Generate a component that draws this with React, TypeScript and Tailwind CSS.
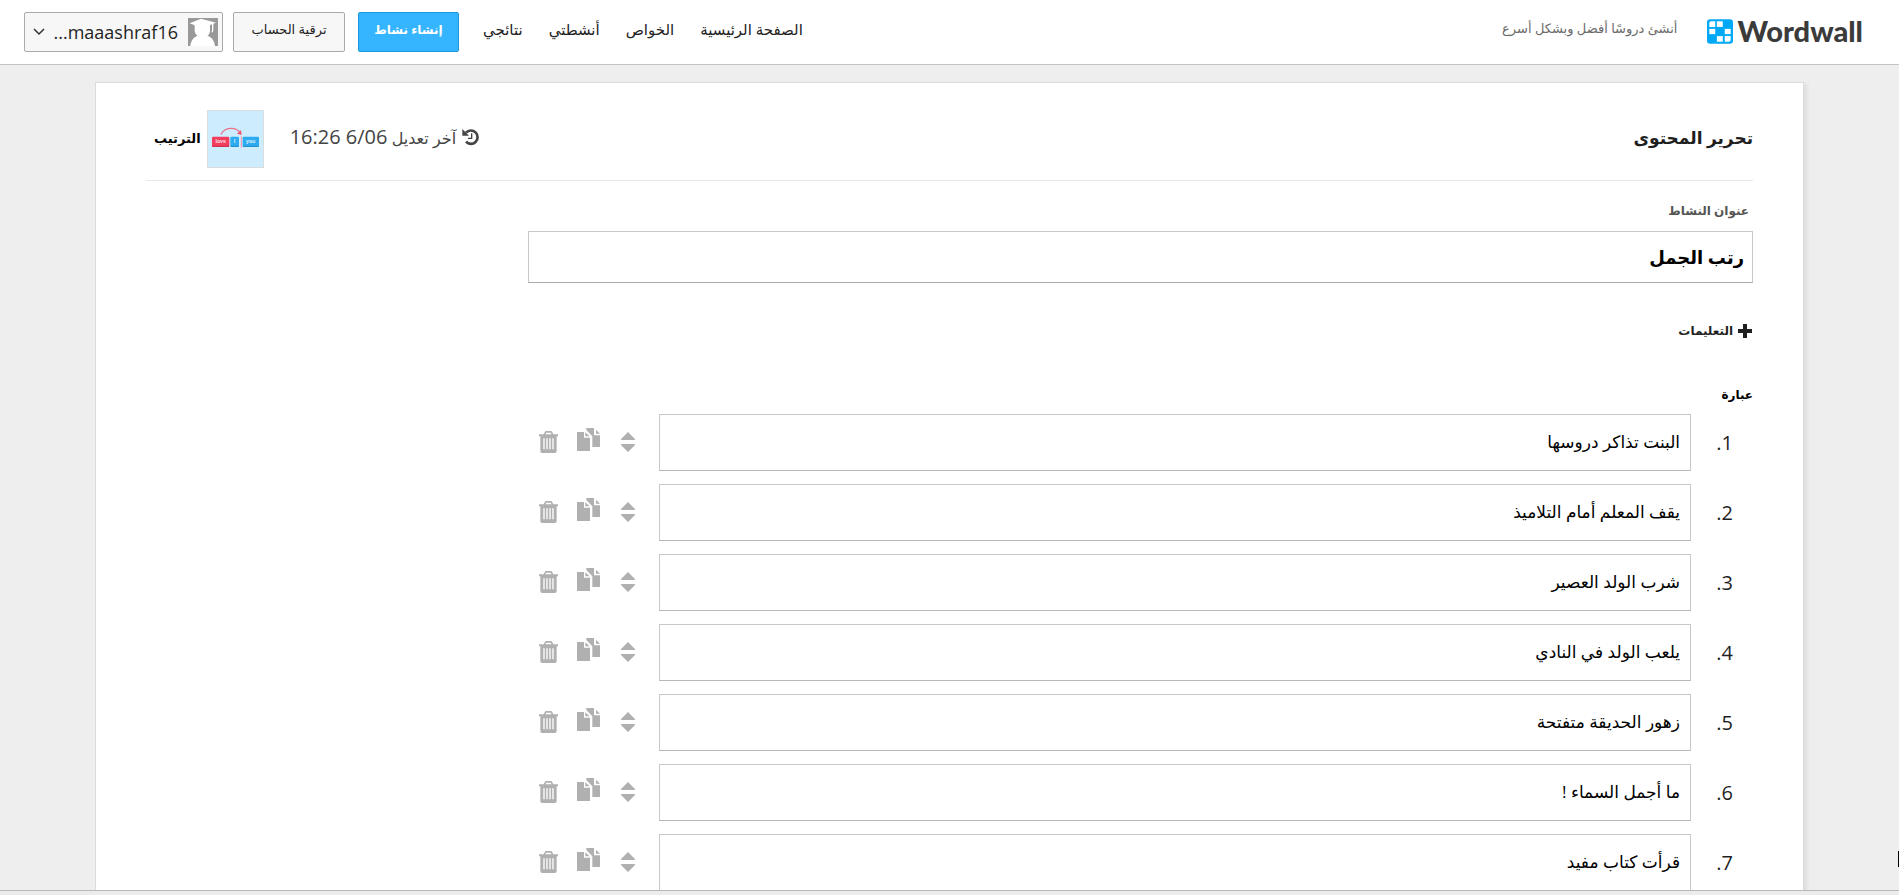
const navLinks = ['الصفحة الرئيسية', 'الخواص', 'أنشطتي', 'نتائجي'];

const phrases = [
	'البنت تذاكر دروسها',
	'يقف المعلم أمام التلاميذ',
	'شرب الولد العصير',
	'يلعب الولد في النادي',
	'زهور الحديقة متفتحة',
	'ما أجمل السماء !',
	'قرأت كتاب مفيد',
];

function LogoMark() {
	return (
		<svg width="26" height="25" viewBox="0 0 79 74" aria-hidden="true">
			<rect width="79" height="74" rx="10" fill="#00a9f7" />
			<g fill="#fff">
				<path d="M7 12a6 6 0 0 1 6-6h12v17H7z" />
				<rect x="30" y="6" width="18" height="17" />
				<rect x="7" y="29" width="18" height="16" />
				<rect x="54" y="29" width="18" height="16" />
				<rect x="30" y="51" width="18" height="17" />
				<path d="M54 51h18v11a6 6 0 0 1-6 6H54z" />
			</g>
		</svg>
	);
}

function Avatar() {
	return (
		<svg width="30" height="28" viewBox="0 0 90 84" aria-hidden="true">
			<rect width="90" height="84" fill="#999" />
			<path fill="#fff" d="M39 2 84 14 66 21v17c0 7-3 12-8 15 13 4 21 14 23 31H7c2-17 10-27 22-31-6-4-9-9-9-15V22L5 16z" />
			<path d="M74 16v22M73 38v5" stroke="#fff" strokeWidth="4" />
		</svg>
	);
}

function OrderThumb() {
	return (
		<svg width="57" height="58" viewBox="0 0 171 174" aria-hidden="true">
			<rect x="1" y="1" width="169" height="172" fill="#cdedff" stroke="#d9d9d9" strokeWidth="3" />
			<path d="M42 73c12-22 44-24 58-4" fill="none" stroke="#ee7089" strokeWidth="4" />
			<path d="m90 71 14 4-2-15z" fill="#ee5570" />
			<path d="M103 79v34" stroke="#f28ba0" strokeWidth="3" />
			<rect x="15" y="80" width="52" height="31" rx="4" fill="#f23d5e" />
			<path d="M16 109h50" stroke="#c92f4c" strokeWidth="3" />
			<rect x="70" y="80" width="26" height="31" rx="4" fill="#2eabef" />
			<rect x="107" y="80" width="49" height="31" rx="4" fill="#2eabef" />
			<path d="M71 109h24M108 109h47" stroke="#238dc9" strokeWidth="3" />
			<g fill="#fff" fontFamily="Open Sans, sans-serif" fontSize="15" fontWeight="700" textAnchor="middle" opacity=".8">
				<text x="41" y="99">love</text>
				<text x="83" y="99">I</text>
				<text x="131" y="99">you</text>
			</g>
		</svg>
	);
}

function HistoryIcon() {
	return (
		<svg width="18" height="18" viewBox="0 0 54 54" fill="none" stroke="currentColor" aria-hidden="true">
			<path d="M12 14a20 20 0 1 1 0 27" strokeWidth="8" />
			<path d="M1 3v20h20z" fill="currentColor" stroke="none" />
			<path d="M29 16v15H18" strokeWidth="4" />
		</svg>
	);
}

function PlusIcon() {
	return (
		<svg width="16" height="14" viewBox="0 0 16 14" fill="currentColor" aria-hidden="true">
			<path d="M6 0h4v5h5v4h-5v5H6V9H1V5h5z" />
		</svg>
	);
}

function SortIcon() {
	return (
		<svg width="14" height="20" viewBox="0 0 14 20" fill="currentColor" aria-hidden="true">
			<path d="M7 0l7 7v1H0V7zM0 12h14v1l-7 7-7-7z" />
		</svg>
	);
}

function CopyIcon() {
	return (
		<svg width="23" height="23" viewBox="0 0 69 69" fill="currentColor" aria-hidden="true">
			<path d="M0 12h21v17h18v40H0z" />
			<path d="M25 13l13 12H25z" />
			<path d="M28 0h23v22h18v35H46V25L28 6z" />
			<path d="M57 5l12 12H57z" />
		</svg>
	);
}

function TrashIcon() {
	return (
		<svg width="19" height="22" viewBox="0 0 57 66" fill="currentColor" aria-hidden="true">
			<path
				fillRule="evenodd"
				d="M14 10l3-6c1-3 3-4 6-4h11c3 0 5 1 6 4l3 6h14v6h-4v44c0 4-2 6-6 6H10c-4 0-6-2-6-6V16H0v-6zm5 0h19l-3-5H22zM13 22v33h4V22zm9 0v33h4V22zm9 0v33h4V22zm9 0v33h4V22z"
			/>
		</svg>
	);
}

export default function App() {
	return (
		<div dir="rtl" className="relative flex h-screen flex-col overflow-hidden bg-[#eeeeee] font-['Open_Sans','DejaVu_Sans',sans-serif] text-[#1f1f1f]">
			<header className="flex h-[65px] shrink-0 items-center justify-between border-b border-[#c4c4c4] bg-white pr-9 pl-6">
				<div className="flex items-center gap-[30px] pb-[2px]">
					<a href="#" dir="ltr" className="flex items-center gap-1">
						<LogoMark />
						<span className="font-['Lato',sans-serif] text-[29px] leading-8 font-black text-[#3b3b3b]">Wordwall</span>
					</a>
					<p className="pb-1 text-[13px] text-[#6b6b6b]">أنشئ دروسًا أفضل وبشكل أسرع</p>
				</div>
				<div className="flex items-center">
					<nav className="flex gap-[26px] pb-[6px] pl-6 text-[15px] text-[#222]">
						{navLinks.map((link) => (
							<a key={link} href="#">{link}</a>
						))}
					</nav>
					<button className="h-10 w-[101px] rounded-xs border border-[#1d97da] bg-[#35b5ff] pb-1 text-xs font-bold text-white">إنشاء نشاط</button>
					<button className="mr-[13px] h-10 w-28 rounded-xs border border-[#aaa] bg-[#f7f7f7] pb-1 text-[13px]">ترقية الحساب</button>
					<button className="mr-[10px] flex h-10 w-[199px] items-center rounded-xs border border-[#aaa] bg-[#f7f7f7] pr-1 pl-2">
						<Avatar />
						<span className="mr-[10px] text-lg">maaashraf16...</span>
						<svg className="mr-auto" width="12" height="8" viewBox="0 0 12 8" fill="none" stroke="#333" strokeWidth="1.5" aria-hidden="true">
							<path d="m1 1 5 5 5-5" />
						</svg>
					</button>
				</div>
			</header>

			<div className="min-h-0 flex-1 overflow-hidden pt-[17px]">
				<main className="mx-auto h-full w-[90%] border border-b-0 border-[#dcdcdc] bg-white px-[50px] pt-[27px] shadow-[3px_2px_4px_rgba(0,0,0,0.07)]">
					<div className="flex h-[71px] items-start justify-between border-b border-[#e8e8e8]">
						<h1 className="pt-3 text-[17px] leading-8 font-semibold">تحرير المحتوى</h1>
						<div className="flex h-[58px] items-center pl-2">
							<p className="flex items-center gap-[6px] pb-1 text-[#444]">
								<HistoryIcon />
								<span className="text-base">آخر تعديل <span className="text-[20px]">6/06 16:26</span></span>
							</p>
							<div className="mr-[26px] flex items-center gap-[6px]">
								<OrderThumb />
								<span className="text-[13px] font-bold text-black">الترتيب</span>
							</div>
						</div>
					</div>

					<label htmlFor="title" className="mt-5 block pr-1 text-xs leading-5 font-bold text-[#555]">عنوان النشاط</label>
					<input
						id="title"
						defaultValue="رتب الجمل"
						className="mt-[10px] block h-[52px] w-[1225px] max-w-full border border-[#c8c8c8] border-b-[#aaa] px-2 text-lg font-bold text-black"
					/>

					<button className="mt-9 flex h-6 items-center gap-1 text-xs font-bold">
						<PlusIcon />
						التعليمات
					</button>

					<h2 className="mt-10 text-xs leading-6 font-bold text-black">عبارة</h2>
					<ol className="mt-[7px] flex flex-col gap-[13px]">
						{phrases.map((phrase, i) => (
							<li key={i} className="flex h-[57px] w-[1225px] max-w-full items-center">
								<label htmlFor={`item-${i}`} className="w-[62px] pr-5 text-[20px] font-medium">{i + 1}.</label>
								<input
									id={`item-${i}`}
									defaultValue={phrase}
									className="h-full min-w-0 flex-1 border border-[#c8c8c8] border-b-[#b8b8b8] px-[10px] pb-[2px] text-[17px] text-black"
								/>
								<div className="flex w-[131px] items-center pr-6 pb-[2px] text-[#b0b0b0]">
									<button aria-label="نقل"><SortIcon /></button>
									<button aria-label="نسخ" className="mr-[21px] pb-1"><CopyIcon /></button>
									<button aria-label="حذف" className="mr-[19px]"><TrashIcon /></button>
								</div>
							</li>
						))}
					</ol>
				</main>
			</div>

			<footer className="h-[5px] shrink-0 border-t border-[#b8b8b8] bg-[#ececec]" />
			<div className="absolute right-0 bottom-7 h-4 w-px bg-black" />
		</div>
	);
}
